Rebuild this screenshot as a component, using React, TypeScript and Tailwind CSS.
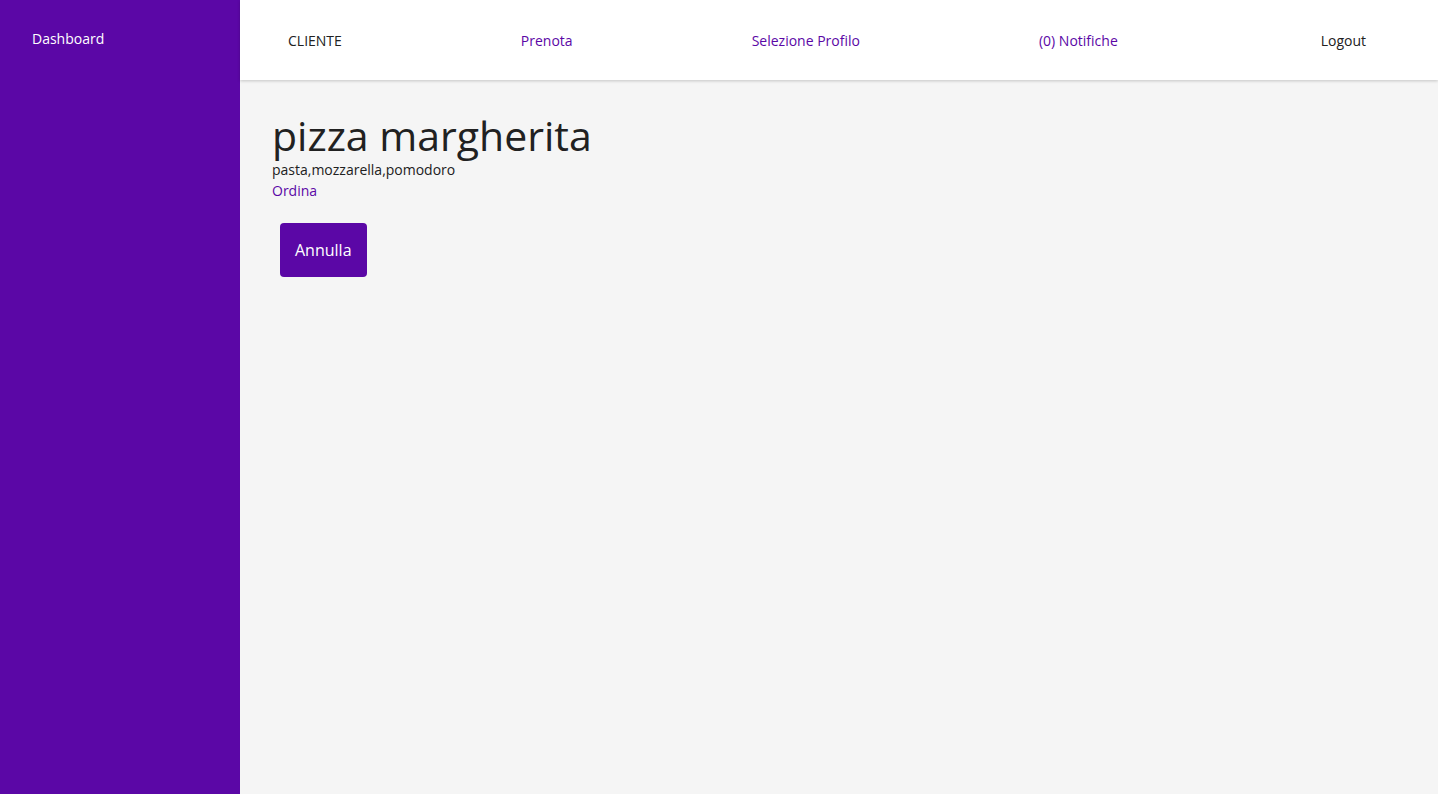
import React from 'react';

const navLinks = [
  { label: 'CLIENTE', accent: false },
  { label: 'Prenota', accent: true },
  { label: 'Selezione Profilo', accent: true },
  { label: '(0) Notifiche', accent: true },
];

export default function App() {
  return (
    <div className="flex min-h-[794px] w-full bg-[#f5f5f5] font-['Open_Sans',sans-serif] text-[#212121]">
      {/* SIDEBAR */}
      <aside className="w-[240px] shrink-0 bg-[#5b07a6] px-8 pt-[26px]">
        <a className="text-sm leading-[21px] text-white">Dashboard</a>
      </aside>

      <div className="flex flex-1 flex-col">
        {/* TOP BAR */}
        <header className="flex h-20 items-center bg-white pt-0.5 pl-12 pr-[72px] shadow-[0_1px_3px_rgba(0,0,0,0.2)]">
          <nav className="flex items-center gap-[179px] text-sm">
            {navLinks.map((l) => (
              <a key={l.label} className={l.accent ? 'text-[#5b07a6]' : 'text-[#212121]'}>
                {l.label}
              </a>
            ))}
          </nav>
          <a className="ml-auto text-sm text-[#212121]">Logout</a>
        </header>

        {/* CONTENT */}
        <main className="px-8 pt-[35px]">
          <h1 className="mb-[3px] text-[41px] leading-none">pizza margherita</h1>
          <p className="text-sm leading-[21px]">pasta,mozzarella,pomodoro</p>
          <a className="block text-sm leading-[21px] text-[#5b07a6]">Ordina</a>
          <button className="mt-[22px] ml-2 rounded bg-[#5b07a6] px-[15px] py-[15px] text-base leading-6 text-white">
            Annulla
          </button>
        </main>
      </div>
    </div>
  );
}
